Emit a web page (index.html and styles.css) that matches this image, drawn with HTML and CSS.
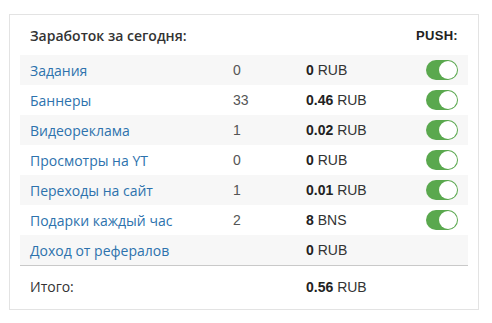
FILE: index.html
```html
<!DOCTYPE html>
<html lang="ru">
<head>
<meta charset="utf-8">
<link rel="stylesheet" href="styles.css">
</head>
<body>
<div class="card">
  <div class="head">
    <div class="title">Заработок за сегодня:</div>
    <div class="push">PUSH:</div>
  </div>
  <div class="rows">
    <div class="row odd"><a class="label">Задания</a><span class="count">0</span><span class="amount"><b>0</b> RUB</span><span class="tog"><i class="switch"></i></span></div>
    <div class="row"><a class="label">Баннеры</a><span class="count">33</span><span class="amount"><b>0.46</b> RUB</span><span class="tog"><i class="switch"></i></span></div>
    <div class="row odd"><a class="label">Видеореклама</a><span class="count">1</span><span class="amount"><b>0.02</b> RUB</span><span class="tog"><i class="switch"></i></span></div>
    <div class="row"><a class="label">Просмотры на YT</a><span class="count">0</span><span class="amount"><b>0</b> RUB</span><span class="tog"><i class="switch"></i></span></div>
    <div class="row odd"><a class="label">Переходы на сайт</a><span class="count">1</span><span class="amount"><b>0.01</b> RUB</span><span class="tog"><i class="switch"></i></span></div>
    <div class="row"><a class="label">Подарки каждый час</a><span class="count">2</span><span class="amount"><b>8</b> BNS</span><span class="tog"><i class="switch"></i></span></div>
    <div class="row odd"><a class="label">Доход от рефералов</a><span class="count"></span><span class="amount"><b>0</b> RUB</span><span class="tog"></span></div>
  </div>
  <div class="row total"><span class="label plain">Итого:</span><span class="count"></span><span class="amount"><b>0.56</b> RUB</span><span class="tog"></span></div>
</div>
</body>
</html>
```
FILE: styles.css
```css
html, body { margin: 0; padding: 0; background: #fff; }
body { font-family: "Liberation Sans", Arial, sans-serif; color: #333; }
.card {
  margin: 14px 13px 0 9px;
  border: 1px solid #e3e3e3;
  padding: 0 10px;
  height: 296px;
  box-sizing: border-box;
}
.head {
  display: flex;
  justify-content: space-between;
  align-items: center;
  height: 40px;
  padding: 1px 10px 0;
  box-sizing: border-box;
}
.title { font-family: "Open Sans", sans-serif; font-size: 14px; font-weight: 600; color: #333; }
.push { font-size: 13px; font-weight: bold; letter-spacing: 0.3px; color: #222; }
.row {
  display: grid;
  grid-template-columns: 203px 73px 120px 1fr;
  align-items: center;
  height: 30px;
}
.row.odd { background: #f7f7f7; }
.row > * { padding: 0 10px; }
.label { font-family: "Open Sans", sans-serif; font-size: 14px; color: #2d72ad; }
.label.plain { color: #333; }
.count { font-size: 14px; color: #555; }
.amount { font-size: 14px; color: #333; }
.amount b { color: #222; }
.tog { display: flex; justify-content: flex-end; }
.switch {
  display: block;
  position: relative;
  width: 32px;
  height: 20px;
  border-radius: 10px;
  background: #5aa84e;
}
.switch::after {
  content: "";
  position: absolute;
  right: 1px;
  top: 1px;
  width: 18px;
  height: 18px;
  border-radius: 50%;
  background: #fff;
}
.total {
  border-top: 1px solid #c9c9c9;
  height: 41px;
}
```
